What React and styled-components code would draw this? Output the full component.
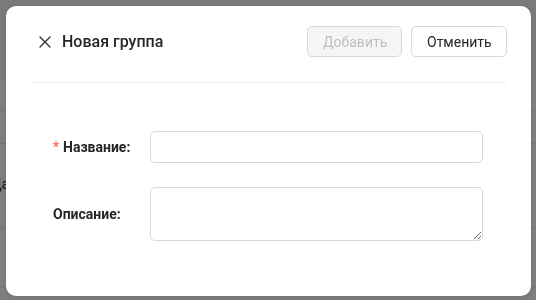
import React from "react";
import styled, { createGlobalStyle } from "styled-components";

const GlobalStyle = createGlobalStyle`
  html, body {
    margin: 0;
    padding: 0;
    width: 536px;
    height: 300px;
    overflow: hidden;
    font-family: Roboto, "Noto Sans", sans-serif;
    background: #fff;
  }
  * {
    box-sizing: border-box;
  }
`;

const Page = styled.div`
  width: 536px;
  height: 300px;
  background: #fff;
  display: flex;
  flex-direction: column;
`;

const PageHead = styled.div`
  height: 79px;
  background: #f4f4f4;
  border-bottom: 1px solid #e8e8e8;
`;

const PageRow = styled.div`
  height: ${(p) => p.h}px;
  border-bottom: 1px solid #e8e8e8;
  display: flex;
  align-items: center;
  font-size: 14px;
  color: #222;
  overflow: hidden;
`;

const PageCell = styled.span`
  margin-left: -9px;
  margin-top: -4px;
`;

const Overlay = styled.div`
  position: fixed;
  inset: 0;
  background: rgba(0, 0, 0, 0.5);
  padding: 6px 5px 4px 6px;
`;

const Modal = styled.div`
  width: 525px;
  height: 290px;
  background: #fff;
  border-radius: 10px;
  box-shadow: 0 2px 6px rgba(0, 0, 0, 0.12);
  padding: 20px 24px 0 24px;
  display: flex;
  flex-direction: column;
`;

const Header = styled.div`
  display: flex;
  align-items: center;
  height: 31px;
  padding-left: 9px;
`;

const CloseButton = styled.button`
  border: none;
  background: none;
  padding: 0;
  width: 12px;
  height: 12px;
  display: flex;
  cursor: pointer;
  margin-right: 11px;
`;

const Title = styled.h3`
  margin: 0;
  font-size: 16px;
  font-weight: 500;
  color: #262626;
  flex: 1;
`;

const Actions = styled.div`
  display: flex;
  gap: 9px;
`;

const Button = styled.button`
  height: 31px;
  padding: 0 15px;
  font-family: Roboto, sans-serif;
  font-size: 14px;
  border-radius: 5px;
  border: 1px solid #d9d9d9;
  background: ${(p) => (p.disabled ? "#f5f5f5" : "#fff")};
  color: ${(p) => (p.disabled ? "#bfbfbf" : "#262626")};
  width: ${(p) => p.w}px;
  cursor: ${(p) => (p.disabled ? "not-allowed" : "pointer")};
`;

const Divider = styled.div`
  height: 1px;
  background: #eeeeee;
  margin-top: 25px;
`;

const Form = styled.div`
  display: grid;
  grid-template-columns: 97px 1fr;
  row-gap: 24px;
  align-items: center;
  padding: 48px 24px 0 23px;
`;

const Label = styled.label`
  font-size: 14px;
  font-weight: 700;
  color: #262626;
`;

const Required = styled.span`
  color: #ff4d4f;
  font-weight: 400;
  margin-right: 4px;
`;

const Input = styled.input`
  height: 32px;
  border: 1px solid #d9d9d9;
  border-radius: 5px;
  padding: 4px 11px;
  font-family: Roboto, sans-serif;
  font-size: 14px;
  outline: none;
`;

const TextArea = styled.textarea`
  height: 54px;
  border: 1px solid #d9d9d9;
  border-radius: 5px;
  padding: 4px 11px;
  font-family: Roboto, sans-serif;
  font-size: 14px;
  outline: none;
  resize: vertical;
  display: block;
`;

function CloseIcon() {
  return (
    <svg width="12" height="12" viewBox="0 0 12 12" fill="none">
      <path d="M1 1L11 11M11 1L1 11" stroke="#333" strokeWidth="1.4" strokeLinecap="round" />
    </svg>
  );
}

export default function App() {
  return (
    <>
      <GlobalStyle />
      <Page>
        <PageHead />
        <PageRow h={32} />
        <PageRow h={33} />
        <PageRow h={85}>
          <PageCell>Дата</PageCell>
        </PageRow>
        <PageRow h={58} />
      </Page>
      <Overlay>
        <Modal>
          <Header>
            <CloseButton aria-label="Закрыть">
              <CloseIcon />
            </CloseButton>
            <Title>Новая группа</Title>
            <Actions>
              <Button disabled w={95}>Добавить</Button>
              <Button w={96}>Отменить</Button>
            </Actions>
          </Header>
          <Divider />
          <Form>
            <Label>
              <Required>*</Required>Название:
            </Label>
            <Input />
            <Label>Описание:</Label>
            <TextArea />
          </Form>
        </Modal>
      </Overlay>
    </>
  );
}
